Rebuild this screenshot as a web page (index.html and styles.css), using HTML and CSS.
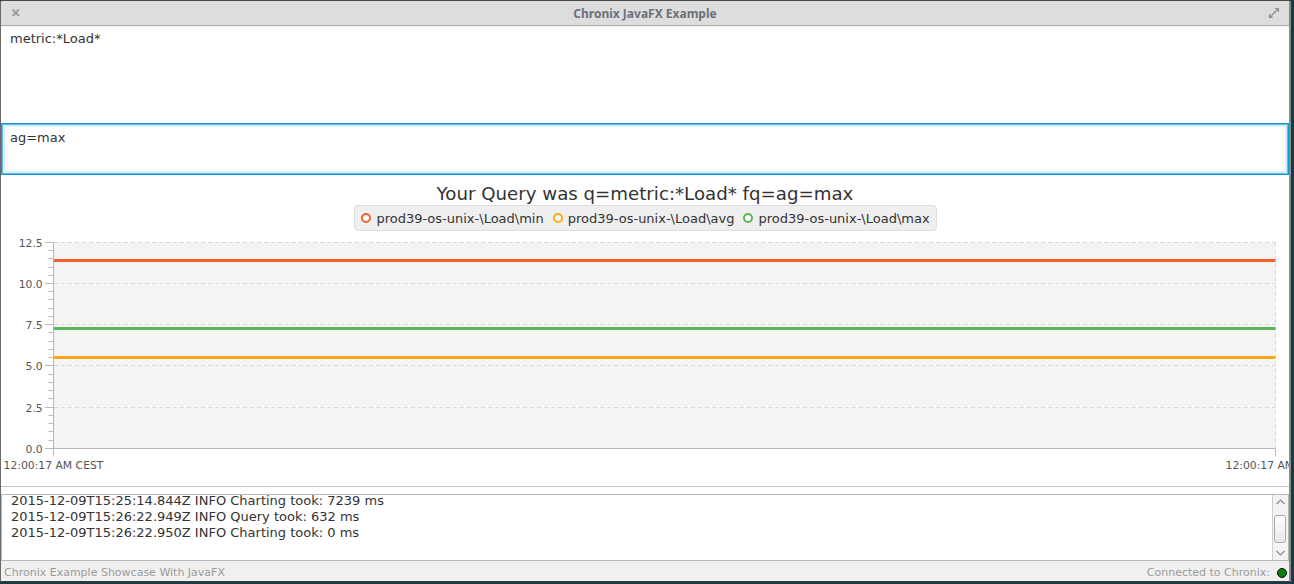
FILE: index.html
```html
<!DOCTYPE html>
<html>
<head>
<meta charset="utf-8">
<title>Chronix JavaFX Example</title>
<link rel="stylesheet" href="styles.css">
</head>
<body>
<div class="window">
  <div class="titlebar">
    <svg class="tb-close" width="14" height="14" viewBox="0 0 14 14"><path d="M3.5 3.5 L10 10 M10 3.5 L3.5 10" stroke="#9d9d9d" stroke-width="2" fill="none"/></svg>
    <span class="tb-title">Chronix JavaFX Example</span>
    <svg class="tb-max" width="12" height="12" viewBox="0 0 12 12"><path d="M11 1 L6.5 1 L11 5.5 Z M1 11 L1 6.5 L5.5 11 Z" fill="#8e8e8e"/><path d="M8.5 3.5 L6 6 M3.5 8.5 L6 6" stroke="#8e8e8e" stroke-width="1.4"/></svg>
  </div>
  <div class="query">metric:*Load*</div>
  <div class="filter">ag=max</div>
  <div class="chart">
    <div class="chart-title">Your Query was q=metric:*Load* fq=ag=max</div>
    <div class="legend-row">
      <div class="legend">
        <div class="legend-item"><span class="sym sym-min"></span>prod39-os-unix-\Load\min</div>
        <div class="legend-item"><span class="sym sym-avg"></span>prod39-os-unix-\Load\avg</div>
        <div class="legend-item"><span class="sym sym-max"></span>prod39-os-unix-\Load\max</div>
      </div>
    </div>
    <svg class="plot" width="1288" height="255" viewBox="0 0 1288 255">
      <rect x="52.5" y="11.5" width="1222" height="206" fill="#f4f4f4"/>
      <g stroke="#d9d9d9" stroke-width="1" stroke-dasharray="4 3" fill="none">
        <path d="M53 11.5 H1274.5"/>
        <path d="M53 52.5 H1274.5"/>
        <path d="M53 93.5 H1274.5"/>
        <path d="M53 134.5 H1274.5"/>
        <path d="M53 176.5 H1274.5"/>
        <path d="M1274.5 11.5 V217.5"/>
      </g>
      <g stroke-width="3" fill="none">
        <path d="M53 29.5 H1274.5" stroke="#f3622d"/>
        <path d="M53 97.5 H1274.5" stroke="#57b757"/>
        <path d="M53 126.5 H1274.5" stroke="#fba71b"/>
      </g>
      <g stroke="#b8b8b8" stroke-width="1" fill="none">
        <path d="M52.5 11.5 V225.5"/>
        <path d="M52.5 217.5 H1274.5"/>
        <path d="M1274.5 217.5 V225.5"/>
        <path d="M44 11.5 H52.5 M44 52.5 H52.5 M44 93.5 H52.5 M44 134.5 H52.5 M44 176.5 H52.5 M44 217.5 H52.5"/>
        <path d="M47.5 19.5 H52.5 M47.5 27.5 H52.5 M47.5 36.5 H52.5 M47.5 44.5 H52.5"/>
        <path d="M47.5 60.5 H52.5 M47.5 68.5 H52.5 M47.5 77.5 H52.5 M47.5 85.5 H52.5"/>
        <path d="M47.5 101.5 H52.5 M47.5 110.5 H52.5 M47.5 118.5 H52.5 M47.5 126.5 H52.5"/>
        <path d="M47.5 143.5 H52.5 M47.5 151.5 H52.5 M47.5 159.5 H52.5 M47.5 167.5 H52.5"/>
        <path d="M47.5 184.5 H52.5 M47.5 192.5 H52.5 M47.5 200.5 H52.5 M47.5 209.5 H52.5"/>
      </g>
      <g class="tick-labels">
        <text x="41.7" y="15.5" text-anchor="end">12.5</text>
        <text x="41.7" y="56.5" text-anchor="end">10.0</text>
        <text x="41.7" y="97.5" text-anchor="end">7.5</text>
        <text x="41.7" y="138.5" text-anchor="end">5.0</text>
        <text x="41.7" y="180.5" text-anchor="end">2.5</text>
        <text x="41.7" y="221.5" text-anchor="end">0.0</text>
        <text x="52.5" y="238.3" text-anchor="middle">12:00:17 AM CEST</text>
        <text x="1274.5" y="238.3" text-anchor="middle">12:00:17 AM CEST</text>
      </g>
    </svg>
  </div>
  <div class="log">
    <div class="log-text">
      <div class="log-line">2015-12-09T15:25:14.844Z INFO Charting took: 7239 ms</div>
      <div class="log-line">2015-12-09T15:26:22.949Z INFO Query took: 632 ms</div>
      <div class="log-line">2015-12-09T15:26:22.950Z INFO Charting took: 0 ms</div>
    </div>
    <div class="scrollbar">
      <div class="sb-btn"><svg width="15" height="16" viewBox="0 0 15 16"><path d="M3.5 9 L7.5 5 L11.5 9" stroke="#8a8a8a" stroke-width="1.2" fill="none"/></svg></div>
      <div class="sb-track"><div class="sb-thumb"></div></div>
      <div class="sb-btn"><svg width="15" height="16" viewBox="0 0 15 16"><path d="M3.5 7 L7.5 11 L11.5 7" stroke="#8a8a8a" stroke-width="1.2" fill="none"/></svg></div>
    </div>
  </div>
  <div class="status">
    <span class="status-left">Chronix Example Showcase With JavaFX</span>
    <span class="status-right">Connected to Chronix:<span class="dot"></span></span>
  </div>
</div>
</body>
</html>
```

FILE: styles.css
```css
* { box-sizing: border-box; }

html, body {
  margin: 0;
  padding: 0;
}

body {
  width: 1294px;
  height: 584px;
  overflow: hidden;
  background: #173b45;
  font-family: "DejaVu Sans", "Liberation Sans", sans-serif;
  color: #333333;
}

.window {
  box-sizing: content-box;
  width: 1288px;
  height: 580px;
  border-top: 1px solid #4a4a4a;
  border-left: 1px solid #6a6a6a;
  border-right: 2px solid #8a8a8a;
  border-bottom: 1px solid #3a3a3a;
  border-radius: 3px 3px 0 0;
  background: #ffffff;
  overflow: hidden;
  display: flex;
  flex-direction: column;
}

/* title bar */
.titlebar {
  height: 25px;
  flex: none;
  background: #dddddd;
  border-bottom: 1px solid #adadad;
  display: grid;
  grid-template-columns: 40px 1fr 40px;
  align-items: center;
  padding-top: 3px;
}

.tb-close {
  justify-self: start;
  margin-left: 8px;
  margin-top: -3px;
}

.tb-title {
  justify-self: center;
  font-family: "Noto Sans", "Open Sans", sans-serif;
  font-weight: bold;
  font-size: 12px;
  line-height: 16px;
  color: #6b717b;
  margin-top: -1px;
}

.tb-max {
  justify-self: end;
  margin-right: 9px;
  margin-top: -4px;
}

/* text areas */
.query {
  height: 97px;
  flex: none;
  padding: 5px 9px;
  font-size: 13px;
  line-height: 16px;
  background: #ffffff;
  box-shadow: inset 0 2px 2px -1px rgba(0, 0, 0, 0.06);
}

.filter {
  height: 52px;
  flex: none;
  padding: 6px 8px;
  font-size: 13px;
  line-height: 16px;
  background: #ffffff;
  border: 1px solid #1399d2;
  box-shadow: inset 0 0 0 1px #62bce3, inset 0 0 0 3px #dbeff8;
}

/* chart */
.chart {
  height: 312px;
  flex: none;
  border-bottom: 1px solid #c6c6c6;
  padding-top: 8px;
  display: flex;
  flex-direction: column;
  align-items: stretch;
}

.chart-title {
  text-align: center;
  font-size: 18.2px;
  line-height: 21px;
  color: #333333;
}

.legend-row {
  display: flex;
  justify-content: center;
  margin-top: 1px;
  padding-left: 1px;
}

.legend {
  height: 26px;
  display: flex;
  align-items: center;
  gap: 9px;
  padding: 0 6px;
  background: #efefef;
  border: 1px solid #dedede;
  border-radius: 4px;
}

.legend-item {
  display: flex;
  align-items: center;
  gap: 5px;
  font-size: 13px;
  line-height: 15px;
  color: #333333;
  white-space: nowrap;
}

.sym {
  width: 10px;
  height: 10px;
  border-radius: 50%;
  background: #ffffff;
  border: 2px solid #f3622d;
  flex: none;
}

.sym-min { border-color: #f3622d; }
.sym-avg { border-color: #fba71b; }
.sym-max { border-color: #57b757; }

.plot {
  display: block;
  flex: none;
}

.tick-labels text {
  font-family: "DejaVu Sans", sans-serif;
  font-size: 10.8px;
  fill: #555555;
}

/* log area */
.log {
  height: 67px;
  flex: none;
  margin-top: 7px;
  border: 1px solid #b9b9b9;
  display: flex;
  overflow: hidden;
  background: #ffffff;
}

.log-text {
  flex: 1;
  padding-left: 9px;
  margin-top: -2px;
  font-size: 13px;
  line-height: 15.9px;
  color: #333333;
  overflow: hidden;
}

.scrollbar {
  width: 16px;
  flex: none;
  border-left: 1px solid #cfcfcf;
  background: #f3f3f3;
  display: flex;
  flex-direction: column;
}

.sb-btn {
  height: 16px;
  flex: none;
}

.sb-btn svg {
  display: block;
}

.sb-track {
  flex: 1;
  padding-left: 1px;
}

.sb-thumb {
  margin-top: 4px;
  width: 12px;
  height: 28px;
  border: 1px solid #a9a9a9;
  border-radius: 3px;
  background: linear-gradient(#ffffff, #e9e9e9);
}

/* status bar */
.status {
  height: 20px;
  flex: none;
  background: #f0f0f0;
  display: flex;
  justify-content: space-between;
  align-items: flex-start;
  padding: 5px 2px 0 3px;
  font-size: 11px;
  line-height: 13px;
  color: #9b9b9b;
}

.status-right {
  display: flex;
  align-items: center;
}

.dot {
  display: inline-block;
  width: 10px;
  height: 10px;
  margin-left: 7px;
  margin-top: 1px;
  border-radius: 50%;
  background: #0b7e0b;
  border: 1px solid #0c0c0c;
}
```
